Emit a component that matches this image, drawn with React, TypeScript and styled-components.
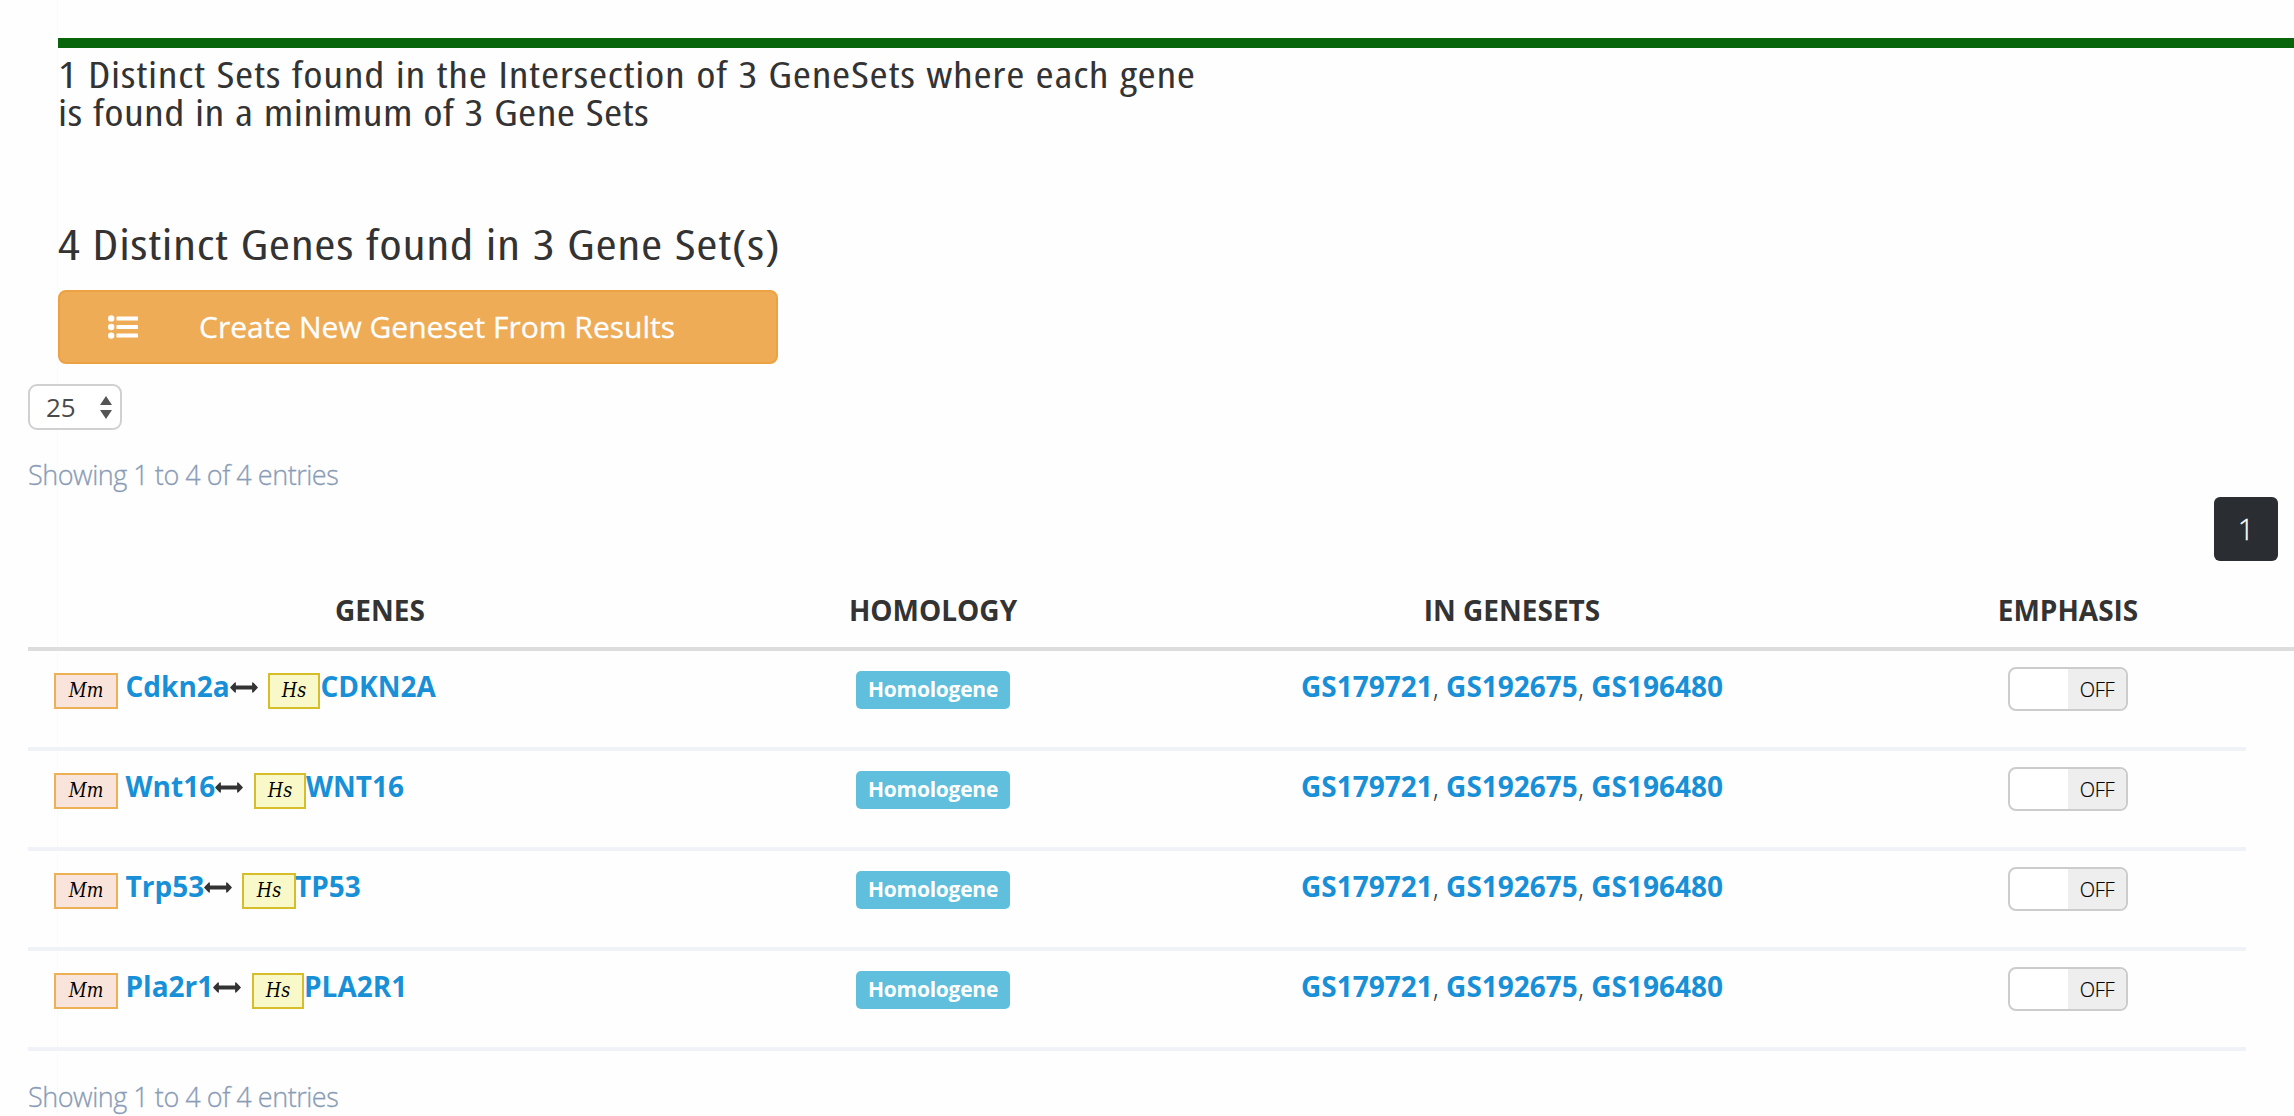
import React from 'react';
import styled, { createGlobalStyle } from 'styled-components';

const GlobalStyle = createGlobalStyle`
  *, *::before, *::after { box-sizing: border-box; }
  html, body { margin: 0; padding: 0; background: #fefefe; }
  body { font-family: 'Open Sans', 'Noto Sans', sans-serif; color: #333; overflow: hidden; }
  h2, h3, p { margin: 0; }
`;

const Page = styled.main`
  display: flex;
  flex-direction: column;
  width: 2294px;
  height: 1116px;
  overflow: hidden;
  padding-top: 38px;
  background: linear-gradient(to right, #fefefe 57px, #fafafa 57px, #fafafa 58px, #fefefe 58px);
`;

const Summary = styled.section`
  display: flex;
  flex-direction: column;
  align-items: flex-start;
  margin-left: 58px;
  border-top: 10px solid #08650c;
`;

const Title = styled.h2<{ $size: number; $line: number; $spacing: number }>`
  font-family: 'Open Sans', 'Noto Sans', sans-serif;
  font-stretch: 75%;
  font-weight: 400;
  font-size: ${(p) => p.$size}px;
  line-height: ${(p) => p.$line}px;
  letter-spacing: ${(p) => p.$spacing}px;
  word-spacing: 1.5px;
  white-space: nowrap;
  color: #333;
  transform: scaleX(1.22);
  transform-origin: left center;
`;

const SetsTitle = styled(Title)`
  margin-top: 8px;
`;

const TitleLine = styled.span<{ $spacing: number }>`
  display: block;
  letter-spacing: ${(p) => p.$spacing}px;
`;

const GenesTitle = styled(Title)`
  margin-top: 85px;
`;

const CreateButton = styled.button`
  display: flex;
  align-items: center;
  width: 720px;
  height: 74px;
  margin-top: 19px;
  padding: 0 0 0 48px;
  gap: 61px;
  border: 2px solid #eca242;
  border-radius: 8px;
  background: #eeac57;
  color: #fff;
  font: 400 30px/40px 'Open Sans', 'Noto Sans', sans-serif;
  -webkit-text-stroke: 0.3px #fff;
  white-space: nowrap;
`;

const LengthSelect = styled.div`
  display: flex;
  align-items: center;
  justify-content: space-between;
  width: 94px;
  height: 46px;
  margin: 20px 0 0 28px;
  padding: 0 8px 0 16px;
  border: 2px solid #d0d0d0;
  border-radius: 9px;
  background: #fff;
  color: #4a4a4a;
  font-size: 26px;
  line-height: 42px;
`;

const Info = styled.p<{ $top: number }>`
  margin: ${(p) => p.$top}px 0 0 28px;
  font-weight: 300;
  font-size: 27px;
  line-height: 38px;
  letter-spacing: -0.47px;
  white-space: nowrap;
  color: #8a9cb6;
  -webkit-text-stroke: 0.3px #8a9cb6;
`;

const Pager = styled.nav`
  display: flex;
  justify-content: flex-end;
  padding-right: 16px;
  margin-top: 3px;
`;

const PageButton = styled.button`
  width: 64px;
  height: 64px;
  padding: 0;
  border: 0;
  border-radius: 6px;
  background: #2a2d32;
  color: #fff;
  font: 300 29px/62px 'Open Sans', 'Noto Sans', sans-serif;
  -webkit-text-stroke: 0.3px #fff;
`;

const HeaderRow = styled.div`
  display: grid;
  grid-template-columns: 704px 404px 754px 356px;
  height: 90px;
  margin-left: 28px;
  padding-top: 30px;
  border-bottom: 4px solid #ddd;
`;

const HeaderCell = styled.div`
  text-align: center;
  font-weight: 700;
  font-size: 28px;
  line-height: 38px;
  white-space: nowrap;

  &:nth-child(2), &:nth-child(3) { padding-right: 2px; }
`;

const Row = styled.div`
  display: grid;
  grid-template-columns: 704px 404px 754px 356px;
  width: 2218px;
  height: 100px;
  margin-left: 28px;
  padding-top: 16px;
  border-bottom: 4px solid #eff3f8;
`;

const Cell = styled.div<{ $align?: string; $nudge?: number }>`
  display: flex;
  align-items: flex-start;
  justify-content: ${(p) => p.$align ?? 'center'};
  padding-right: ${(p) => p.$nudge ?? 0}px;
  font-weight: 300;
  font-size: 28px;
  line-height: 38px;
  white-space: nowrap;
`;

const GeneCell = styled(Cell)`
  padding-left: 26px;
`;

const Species = styled.span<{ $human?: boolean; $width: number }>`
  flex: none;
  width: ${(p) => p.$width}px;
  height: 36px;
  margin-top: 6px;
  border: 2px solid ${(p) => (p.$human ? '#d5be2a' : '#edb055')};
  background: ${(p) => (p.$human ? '#f9f8c8' : '#f9e4db')};
  color: #000;
  font: italic 400 19.5px/32px 'DejaVu Serif Condensed', 'DejaVu Serif', serif;
  text-align: center;
`;

const Link = styled.a`
  font-weight: 700;
  color: #1890d7;
`;

const MouseGene = styled(Link)<{ $width: number }>`
  width: ${(p) => p.$width}px;
  margin-left: 7.5px;
  margin-right: 0.5px;
`;

const ArrowSlot = styled.span`
  display: flex;
  align-items: center;
  width: 28px;
  height: 40px;
`;

const HumanGene = styled(Link)<{ $gap: number }>`
  margin-left: ${(p) => p.$gap}px;
`;

const Homolog = styled.span<{ $gap: number }>`
  display: flex;
  margin-left: ${(p) => p.$gap}px;
`;

const Badge = styled.span`
  width: 154px;
  height: 38px;
  margin-top: 4px;
  border-radius: 5px;
  background: #5fbfdd;
  color: #fff;
  font-weight: 700;
  font-size: 21px;
  line-height: 36px;
  letter-spacing: -0.25px;
  text-align: center;
`;

const Toggle = styled.span`
  display: flex;
  width: 120px;
  height: 44px;
  overflow: hidden;
  border: 2px solid #ccc;
  border-radius: 8px;
  background: #fff;
`;

const ToggleOff = styled.span`
  width: 58px;
  margin-left: auto;
  background: #eee;
  color: #000;
  font-weight: 300;
  font-size: 20px;
  line-height: 41px;
  letter-spacing: -0.3px;
  text-align: center;
  -webkit-text-stroke: 0.2px #000;
`;

const ListIcon = () => (
  <svg width="30" height="24" viewBox="0 0 30 24" fill="#fff">
    {[3.4, 12, 20.6].map((y) => (
      <g key={y}>
        <circle cx="3.2" cy={y} r="3.2" />
        <rect x="8.5" y={y - 2} width="21.5" height="4" rx="0.5" />
      </g>
    ))}
  </svg>
);

const SortArrows = () => (
  <svg width="12" height="23" viewBox="0 0 12 23" fill="#555">
    <path d="M6 0L12 9H0z" />
    <path d="M6 23L12 14H0z" />
  </svg>
);

const ArrowsH = () => (
  <svg width="28" height="11" viewBox="0 0 28 11" fill="#333">
    <path d="M0.4 4.9L4.5 0.7Q5.9-0.2 5.9 1.3V3.6H22.1V1.3Q22.1-0.2 23.5 0.7L27.6 4.9Q28.1 5.5 27.6 6.1L23.5 10.3Q22.1 11.2 22.1 9.7V7.4H5.9V9.7Q5.9 11.2 4.5 10.3L0.4 6.1Q-0.1 5.5 0.4 4.9z" />
  </svg>
);

const genes = [
  { mouse: 'Cdkn2a', human: 'CDKN2A', width: 104, gap: 10, box: 52, textGap: 0.5 },
  { mouse: 'Wnt16', human: 'WNT16', width: 89, gap: 11, box: 52, textGap: 0 },
  { mouse: 'Trp53', human: 'TP53', width: 78, gap: 10, box: 54, textGap: -1 },
  { mouse: 'Pla2r1', human: 'PLA2R1', width: 87, gap: 11, box: 52, textGap: 0 },
];

const genesets = ['GS179721', 'GS192675', 'GS196480'];

export default function App() {
  return (
    <>
      <GlobalStyle />
      <Page>
        <Summary>
          <SetsTitle $size={36} $line={38} $spacing={0.55}>
            <TitleLine $spacing={0.54}>
              1 Distinct Sets found in the Intersection of 3 GeneSets where each gene
            </TitleLine>
            <TitleLine $spacing={0.3}>is found in a minimum of 3 Gene Sets</TitleLine>
          </SetsTitle>
          <GenesTitle $size={42} $line={54} $spacing={0.5}>
            4 Distinct Genes found in 3 Gene Set(s)
          </GenesTitle>
          <CreateButton>
            <ListIcon />
            Create New Geneset From Results
          </CreateButton>
        </Summary>
        <LengthSelect>
          25
          <SortArrows />
        </LengthSelect>
        <Info $top={26}>Showing 1 to 4 of 4 entries</Info>
        <Pager>
          <PageButton>1</PageButton>
        </Pager>
        <HeaderRow>
          {['GENES', 'HOMOLOGY', 'IN GENESETS', 'EMPHASIS'].map((label) => (
            <HeaderCell key={label}>{label}</HeaderCell>
          ))}
        </HeaderRow>
        {genes.map((g) => (
          <Row key={g.mouse}>
            <GeneCell $align="flex-start">
              <Species $width={64}>Mm</Species>
              <MouseGene $width={g.width}>{g.mouse}</MouseGene>
              <ArrowSlot>
                <ArrowsH />
              </ArrowSlot>
              <Homolog $gap={g.gap}>
                <Species $human $width={g.box}>
                  Hs
                </Species>
                <HumanGene $gap={g.textGap}>{g.human}</HumanGene>
              </Homolog>
            </GeneCell>
            <Cell $nudge={2}>
              <Badge>Homologene</Badge>
            </Cell>
            <Cell $nudge={2}>
              <span>
                {genesets.map((id, i) => (
                  <React.Fragment key={id}>
                    {i > 0 && ', '}
                    <Link>{id}</Link>
                  </React.Fragment>
                ))}
              </span>
            </Cell>
            <Cell>
              <Toggle>
                <ToggleOff>OFF</ToggleOff>
              </Toggle>
            </Cell>
          </Row>
        ))}
        <Info $top={27}>Showing 1 to 4 of 4 entries</Info>
      </Page>
    </>
  );
}
